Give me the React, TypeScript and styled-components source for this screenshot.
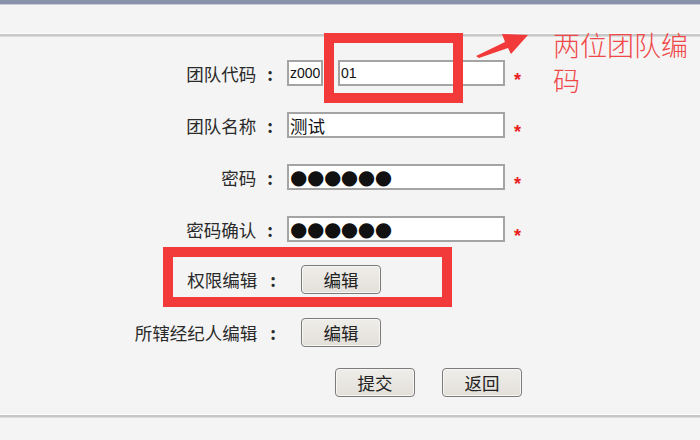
import React from "react";
import styled, { createGlobalStyle } from "styled-components";

const GlobalStyle = createGlobalStyle`
  html, body {
    margin: 0;
    padding: 0;
    background: #f4f4f4;
  }
  body {
    font-family: "Noto Sans CJK SC", "Noto Sans", sans-serif;
    overflow: hidden;
  }
`;

const Page = styled.div`
  position: relative;
  width: 700px;
  height: 440px;
  display: flex;
  flex-direction: column;
  background: #f4f4f4;
`;

const TopBand = styled.div`
  height: 4px;
  background: #8a92ab;
  border-bottom: 1px solid #c9ccd8;
`;

const HeaderSpace = styled.div`
  height: 28px;
`;

const Divider = styled.div`
  height: 2px;
  background: #c8c8c8;
  border-top: 1px solid #fcfcfc;
  border-bottom: 1px solid #dcdcdc;
`;

const Form = styled.div`
  box-sizing: border-box;
  height: 377px;
  padding-top: 10px;
  display: grid;
  grid-template-columns: 280px 1fr;
  grid-template-rows: 52px 52px 52px 52px 48px 58px 42px;
  align-items: center;
`;

const Label = styled.div`
  text-align: right;
  font-size: 17.5px;
  color: #2a2a2a;
  white-space: nowrap;
`;

// wide: the button rows put the colon a little further right
const Colon = styled.span<{ $wide?: boolean }>`
  display: inline-block;
  margin: 0 ${(p) => (p.$wide ? 4 : 7)}px 0 ${(p) => (p.$wide ? 13 : 11)}px;
  font-weight: bold;
`;

const Field = styled.div<{ $indent?: number }>`
  display: flex;
  align-items: center;
  padding-left: ${(p) => p.$indent ?? 7}px;
`;

const TextBox = styled.input<{ $w: number; $gap?: number }>`
  box-sizing: border-box;
  width: ${(p) => p.$w}px;
  height: 26px;
  margin: 0 0 0 ${(p) => p.$gap ?? 0}px;
  padding: 0 1px;
  border: 2px solid #a4a4a4;
  background: #fff;
  color: #111;
  font: 14px "Liberation Sans", Arial, sans-serif;
  outline: none;
`;

const CnBox = styled(TextBox)`
  font: 17.5px "Noto Sans CJK SC", sans-serif;
`;

const DotBox = styled(TextBox)`
  font: 20px "DejaVu Sans", sans-serif;
  letter-spacing: -0.5px;
`;

const Star = styled.span`
  margin: 14px 0 0 9px;
  color: #e8201e;
  font: bold 18px "Liberation Sans", Arial, sans-serif;
`;

const Btn = styled.button`
  box-sizing: border-box;
  width: 80px;
  height: 29px;
  padding: 0;
  border: 1px solid #7b7b7b;
  border-radius: 4px;
  background: linear-gradient(#efede9, #e3e0da);
  box-shadow: inset 0 0 0 1px #f7f6f3;
  color: #222;
  font: 17.5px "Noto Sans CJK SC", sans-serif;
`;

const ActionRow = styled.div`
  grid-column: 1 / 3;
  display: flex;
  padding-left: 335px;
  gap: 27px;
`;

const RedFrame = styled.div<{ $x: number; $y: number; $w: number; $h: number }>`
  position: absolute;
  box-sizing: border-box;
  left: ${(p) => p.$x}px;
  top: ${(p) => p.$y}px;
  width: ${(p) => p.$w}px;
  height: ${(p) => p.$h}px;
  border: 10px solid #f23a3a;
  pointer-events: none;
`;

const Note = styled.div`
  position: absolute;
  left: 553px;
  top: 27px;
  width: 145px;
  font-size: 27px;
  line-height: 35px;
  color: #f04848;
  font-weight: 300;
`;

const Arrow = styled.svg`
  position: absolute;
  left: 0;
  top: 0;
  pointer-events: none;
`;

export default function App() {
  return (
    <Page>
      <GlobalStyle />
      <TopBand />
      <HeaderSpace />
      <Divider />
      <Form>
        <Label>
          团队代码<Colon>:</Colon>
        </Label>
        <Field>
          <TextBox $w={36} readOnly value="z000" />
          <TextBox $w={167} $gap={15} readOnly value="01" />
          <Star>*</Star>
        </Field>

        <Label>
          团队名称<Colon>:</Colon>
        </Label>
        <Field>
          <CnBox $w={218} readOnly value="测试" />
          <Star>*</Star>
        </Field>

        <Label>
          密码<Colon>:</Colon>
        </Label>
        <Field>
          <DotBox $w={218} readOnly value="●●●●●●" />
          <Star>*</Star>
        </Field>

        <Label>
          密码确认<Colon>:</Colon>
        </Label>
        <Field>
          <DotBox $w={218} readOnly value="●●●●●●" />
          <Star>*</Star>
        </Field>

        <Label>
          权限编辑<Colon $wide>:</Colon>
        </Label>
        <Field $indent={21}>
          <Btn>编辑</Btn>
        </Field>

        <Label>
          所辖经纪人编辑<Colon $wide>:</Colon>
        </Label>
        <Field $indent={21}>
          <Btn>编辑</Btn>
        </Field>

        <ActionRow>
          <Btn>提交</Btn>
          <Btn>返回</Btn>
        </ActionRow>
      </Form>
      <Divider />

      <RedFrame $x={324} $y={33} $w={139} $h={70} />
      <RedFrame $x={163} $y={247} $w={289} $h={60} />
      <Arrow width="700" height="440" viewBox="0 0 700 440">
        <polygon
          points="476,56 505,42 502,34 528,35 511,54 508,48 479,58"
          fill="#f23a3a"
        />
      </Arrow>
      <Note>两位团队编码</Note>
    </Page>
  );
}
